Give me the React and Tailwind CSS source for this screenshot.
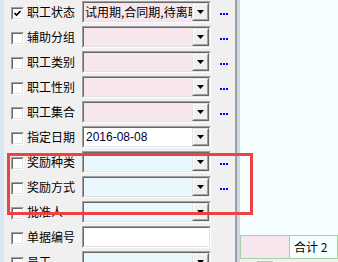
import React from 'react';

const rows = [
    { label: '职工状态', checked: true, value: '试用期,合同期,待离职', bg: 'bg-[#f7e6ee]', drop: true, dots: true },
    { label: '辅助分组', bg: 'bg-[#f7e6ee]', drop: true, dots: true },
    { label: '职工类别', bg: 'bg-[#f7e6ee]', drop: true, dots: true },
    { label: '职工性别', bg: 'bg-[#f7e6ee]', drop: true, dots: true },
    { label: '职工集合', bg: 'bg-[#f7e6ee]', drop: true, dots: true },
    { label: '指定日期', value: '2016-08-08', latin: true, bg: 'bg-white', drop: true },
    { label: '奖励种类', bg: 'bg-[#e8f8fc]', drop: true, dots: true },
    { label: '奖励方式', bg: 'bg-[#e8f8fc]', drop: true, dots: true },
    { label: '批准人', bg: 'bg-[#e8f8fc]', drop: true, dots: true },
    { label: '单据编号', bg: 'bg-white' },
    { label: '员工', bg: 'bg-[#e8f8fc]', drop: true, dots: true },
];

const CheckBox = ({ checked }) => (
    <div className="w-[13px] h-[13px] border border-t-[#a0a0a0] border-l-[#a0a0a0] border-b-white border-r-white">
        <div className="w-full h-full bg-white border border-t-[#696969] border-l-[#696969] border-b-[#e3e3e3] border-r-[#e3e3e3] flex items-center justify-center">
            {checked && (
                <svg width="7" height="7" viewBox="0 0 7 7">
                    <path d="M0.5 3 L2.5 5 L6.5 1" stroke="#000" strokeWidth="1.6" fill="none" />
                </svg>
            )}
        </div>
    </div>
);

const DropButton = () => (
    <div className="w-[17px] h-full shrink-0 bg-[#f0f0f0] border border-t-[#e3e3e3] border-l-[#e3e3e3] border-b-[#696969] border-r-[#696969]">
        <div className="w-full h-full border border-t-white border-l-white border-b-[#a0a0a0] border-r-[#a0a0a0] flex items-center justify-center">
            <svg width="7" height="4" viewBox="0 0 7 4">
                <path d="M0 0 H7 L3.5 4 Z" fill="#000" />
            </svg>
        </div>
    </div>
);

const Dots = () => (
    <div className="flex gap-[1px] mt-[4px]">
        <div className="w-[2px] h-[2px] bg-[#0000ff]" />
        <div className="w-[2px] h-[2px] bg-[#0000ff]" />
        <div className="w-[2px] h-[2px] bg-[#0000ff]" />
    </div>
);

const Row = ({ label, checked, value, latin, bg, drop, dots }) => (
    <div className="h-[25px] flex items-start shrink-0">
        <div className="ml-[7px] mt-[7px]">
            <CheckBox checked={checked} />
        </div>
        <div className="w-[55px] ml-[3px] mt-[4px] text-[12px] leading-[16px] text-black">{label}</div>
        {/* sunken edit box */}
        <div className="mt-[1px] w-[129px] h-[22px] border border-t-[#a0a0a0] border-l-[#a0a0a0] border-b-white border-r-white">
            <div className={`w-full h-full flex border border-t-[#696969] border-l-[#696969] border-b-[#e3e3e3] border-r-[#e3e3e3] ${bg}`}>
                <div
                    className={`flex-1 overflow-hidden whitespace-nowrap pl-[1px] text-[12px] leading-[18px] ${latin ? "font-['Liberation_Sans'] text-[#000033] pl-[2px]" : 'text-black'}`}
                >
                    {value}
                </div>
                {drop && <DropButton />}
            </div>
        </div>
        {dots && (
            <div className="ml-[9px] mt-[9px]">
                <Dots />
            </div>
        )}
    </div>
);

export default function App() {
    return (
        <div className="w-[338px] h-[262px] flex overflow-hidden relative font-['Noto_Sans_CJK_SC','Noto_Sans',sans-serif]">
            {/* left edge */}
            <div className="w-[4px] shrink-0 bg-[#d9e5f2]" />

            {/* filter panel */}
            <div className="w-[231px] shrink-0 bg-[#f0f0f0] flex flex-col">
                {rows.map((r) => (
                    <Row key={r.label} {...r} />
                ))}
            </div>

            {/* splitter */}
            <div className="w-[2px] shrink-0 bg-[#a0a0a0]" />
            <div className="w-[3px] shrink-0 bg-[#cbd9e6]" />

            {/* grid area */}
            <div className="flex-1 bg-[#f6ffff] flex flex-col">
                <div className="flex-1" />
                <div className="h-[24px] flex border border-[#a6d0a6]">
                    <div className="w-[49px] bg-[#f7e6ee] border-r border-[#a6d0a6]" />
                    <div className="flex-1 pl-[4px] text-[12px] leading-[22px] text-black">
                        合计 <span className="text-[#000040]">2</span>
                    </div>
                </div>
                <div className="h-[3px] bg-[#f0f0f0] flex">
                    <div className="ml-[17px] mt-[2px] w-[16px] h-[1px] bg-[#c8c8c8]" />
                </div>
            </div>

            {/* red annotation box */}
            <div className="absolute left-[7px] top-[153px] w-[246px] h-[62px] border-[3px] border-[#f04040]" />
        </div>
    );
}
